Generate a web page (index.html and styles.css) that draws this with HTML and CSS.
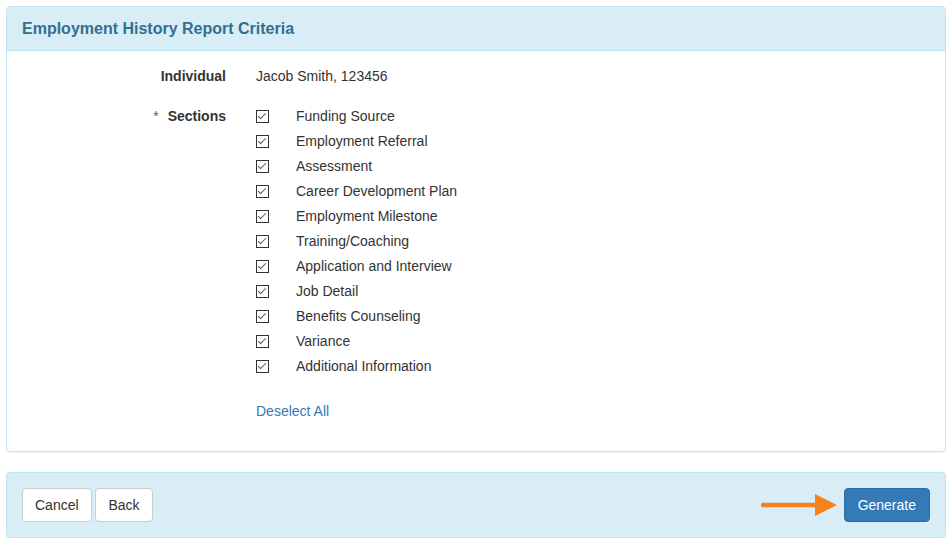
FILE: index.html
```html
<!DOCTYPE html>
<html lang="en">
<head>
    <meta charset="UTF-8">
    <title>Employment History Report Criteria</title>
    <link rel="stylesheet" href="styles.css">
</head>
<body>
    <div class="panel">
        <div class="panel-heading">
            <h3>Employment History Report Criteria</h3>
        </div>
        <div class="panel-body">
            <div class="form-row">
                <div class="form-label">Individual</div>
                <div class="form-value">Jacob Smith, 123456</div>
            </div>
            <div class="form-row sections">
                <div class="form-label"><span class="required">*</span>Sections</div>
                <div class="form-value">
                    <ul class="check-list">
                        <li><span class="check"></span>Funding Source</li>
                        <li><span class="check"></span>Employment Referral</li>
                        <li><span class="check"></span>Assessment</li>
                        <li><span class="check"></span>Career Development Plan</li>
                        <li><span class="check"></span>Employment Milestone</li>
                        <li><span class="check"></span>Training/Coaching</li>
                        <li><span class="check"></span>Application and Interview</li>
                        <li><span class="check"></span>Job Detail</li>
                        <li><span class="check"></span>Benefits Counseling</li>
                        <li><span class="check"></span>Variance</li>
                        <li><span class="check"></span>Additional Information</li>
                    </ul>
                    <a class="deselect" href="#">Deselect All</a>
                </div>
            </div>
        </div>
    </div>

    <div class="panel footer">
        <div class="footer-left">
            <button class="btn">Cancel</button>
            <button class="btn">Back</button>
        </div>
        <div class="footer-right">
            <svg class="arrow" width="78" height="22" viewBox="0 0 78 22">
                <line x1="2" y1="11" x2="58" y2="11" stroke="#f5821f" stroke-width="4.5" stroke-linecap="round"/>
                <polygon points="54,0 76,11 54,22" fill="#f5821f"/>
            </svg>
            <button class="btn btn-primary">Generate</button>
        </div>
    </div>
</body>
</html>
```

FILE: styles.css
```css
body {
    font-family: "Liberation Sans", Arial, sans-serif;
    font-size: 14px;
    color: #333;
    margin: 0;
    padding: 6px 4px 0 6px;
    background-color: #fff;
}
.panel {
    border: 1px solid #bce8f1;
    border-radius: 4px;
    background: #fff;
    box-shadow: 0 1px 1px rgba(0,0,0,0.05);
}
.panel-heading {
    background-color: #d9edf7;
    border-bottom: 1px solid #bce8f1;
    border-radius: 3px 3px 0 0;
    padding: 0 15px;
    height: 43px;
    display: flex;
    align-items: center;
}
.panel-heading h3 {
    margin: 0;
    font-size: 16px;
    font-weight: bold;
    color: #31708f;
}
.panel-body {
    padding: 13px 15px 27px 15px;
}
.form-row {
    display: flex;
    gap: 30px;
    line-height: 25px;
}
.form-row.sections {
    margin-top: 15px;
}
.form-label {
    width: 204px;
    text-align: right;
    font-weight: bold;
}
.required {
    color: #a94442;
    font-weight: normal;
    margin-right: 9px;
}
.check-list {
    list-style: none;
    margin: 0;
    padding: 0;
}
.check-list li {
    display: flex;
    align-items: center;
    height: 25px;
}
.check {
    width: 11px;
    height: 11px;
    border: 1px solid #333;
    margin-right: 27px;
    position: relative;
}
.check::after {
    content: "";
    position: absolute;
    left: 3px;
    top: 0px;
    width: 3px;
    height: 7px;
    border: solid #555;
    border-width: 0 1.5px 1.5px 0;
    transform: rotate(45deg);
}
.deselect {
    display: inline-block;
    margin-top: 22px;
    color: #337ab7;
    text-decoration: none;
    line-height: 20px;
}
.footer {
    margin-top: 20px;
    background-color: #d9edf7;
    padding: 15px;
    display: flex;
    justify-content: space-between;
    align-items: center;
}
.footer-right {
    display: flex;
    align-items: center;
}
.arrow {
    margin-right: 5px;
}
.btn {
    font-family: inherit;
    font-size: 14px;
    line-height: 20px;
    padding: 6px 12px;
    color: #333;
    background: #fff;
    border: 1px solid #ccc;
    border-radius: 4px;
    cursor: pointer;
}
.btn-primary {
    color: #fff;
    background-color: #337ab7;
    border-color: #2e6da4;
    padding: 6px 13px;
}
```
